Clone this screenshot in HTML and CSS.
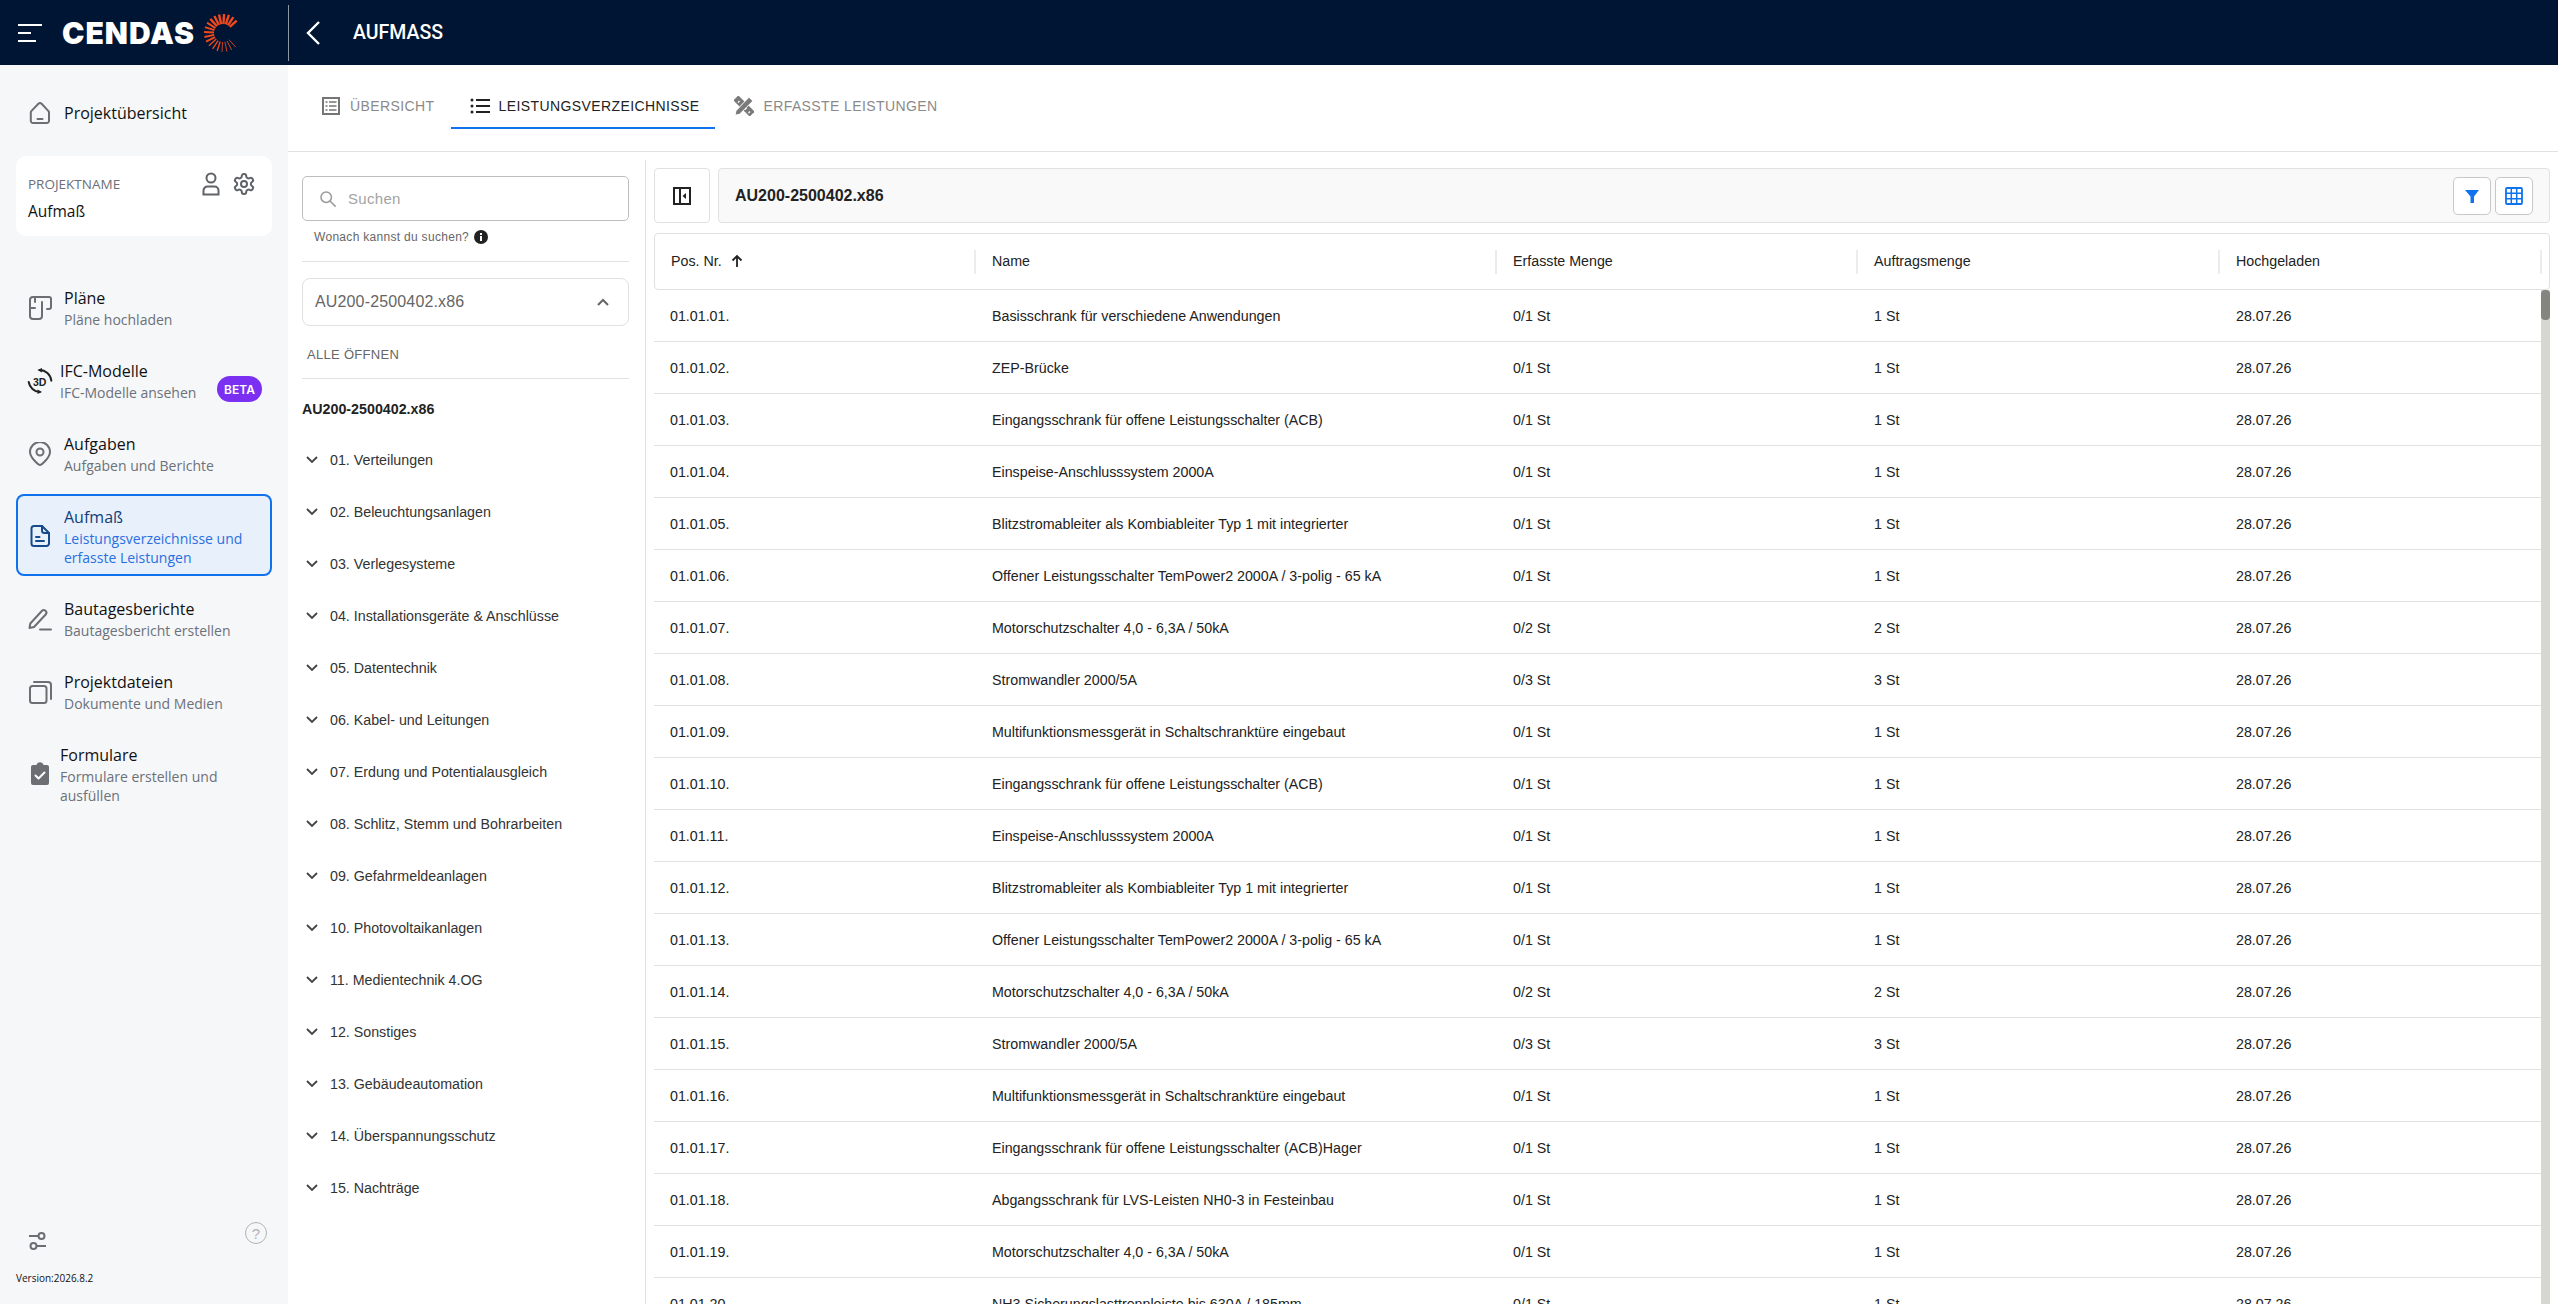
FILE: index.html
```html
<!DOCTYPE html>
<html lang="de">
<head>
<meta charset="utf-8">
<title>CENDAS Aufmaß</title>
<link rel="stylesheet" href="styles.css">
</head>
<body>
<header class="topbar">
  <div class="brand">
    <button class="burger" aria-label="Menü"><i class="bl long"></i><i class="bl short"></i><i class="bl mid"></i></button>
    <span class="logo-text">CENDAS</span>
    <svg class="logo-mark" viewBox="0 0 40 40"><g transform="translate(20 20)">
      <line class="ray r3" x1="9" x2="18.5" transform="rotate(-42)"/><line class="ray r3" x1="9" x2="19" transform="rotate(-57)"/><line class="ray r3" x1="9" x2="19" transform="rotate(-72)"/><line class="ray r3" x1="9" x2="19" transform="rotate(-87)"/><line class="ray r3" x1="9" x2="19" transform="rotate(-102)"/><line class="ray r3" x1="9" x2="19" transform="rotate(-117)"/><line class="ray r3" x1="9" x2="19" transform="rotate(-132)"/><line class="ray r2" x1="9" x2="19" transform="rotate(-147)"/><line class="ray r2" x1="9" x2="19" transform="rotate(-162)"/><line class="ray r2" x1="9" x2="19" transform="rotate(-177)"/><line class="ray r2" x1="9" x2="19" transform="rotate(168)"/><line class="ray r2" x1="9" x2="19" transform="rotate(153)"/><line class="ray r1" x1="9" x2="19" transform="rotate(138)"/><line class="ray r1" x1="9" x2="19" transform="rotate(123)"/><line class="ray r1" x1="9" x2="19" transform="rotate(108)"/><line class="ray r0" x1="9" x2="19" transform="rotate(93)"/><line class="ray r0" x1="9" x2="19" transform="rotate(78)"/><line class="ray r0" x1="9" x2="19" transform="rotate(63)"/><line class="ray r0" x1="9" x2="19" transform="rotate(48)"/>
    </g></svg>
  </div>
  <div class="page-head">
    <svg class="back" viewBox="0 0 16 26"><path d="M14 2 3 13l11 11"/></svg>
    <h1 class="page-title">AUFMASS</h1>
  </div>
</header>
<div class="layout">
  <aside class="sidebar">
    <a class="overview">
      <svg class="ico" viewBox="0 0 24 24"><path d="M10.400 2.800a2.200 2.200 0 0 1 3.200 0l6.900 7.300a2.500 2.500 0 0 1 .5 1.500v8.200a2.200 2.200 0 0 1-2.200 2.200H5a2.200 2.200 0 0 1-2.200-2.200v-8.200a2.500 2.500 0 0 1 .5-1.500z"/><path d="M9.500 18h5"/></svg>
      <span>Projektübersicht</span>
    </a>
    <section class="project-card">
      <div class="project-info">
        <div class="project-label">PROJEKTNAME</div>
        <div class="project-name">Aufmaß</div>
      </div>
      <div class="project-actions">
        <svg class="person" viewBox="0 0 18 24"><circle cx="9" cy="6" r="4.500"/><path d="M1.500 22.500v-4a4 4 0 0 1 4-4h7a4 4 0 0 1 4 4v4z"/></svg>
        <svg class="gear" viewBox="0 0 24 24"><path d="M12.220 2h-.44a2 2 0 0 0-2 2v.18a2 2 0 0 1-1 1.730l-.43.25a2 2 0 0 1-2 0l-.15-.08a2 2 0 0 0-2.730.73l-.22.38a2 2 0 0 0 .73 2.730l.15.1a2 2 0 0 1 1 1.720v.51a2 2 0 0 1-1 1.740l-.15.09a2 2 0 0 0-.73 2.730l.22.38a2 2 0 0 0 2.730.73l.15-.08a2 2 0 0 1 2 0l.43.25a2 2 0 0 1 1 1.730V20a2 2 0 0 0 2 2h.44a2 2 0 0 0 2-2v-.18a2 2 0 0 1 1-1.730l.43-.25a2 2 0 0 1 2 0l.15.08a2 2 0 0 0 2.730-.73l.22-.39a2 2 0 0 0-.73-2.730l-.15-.08a2 2 0 0 1-1-1.740v-.5a2 2 0 0 1 1-1.740l.15-.09a2 2 0 0 0 .73-2.730l-.22-.38a2 2 0 0 0-2.730-.73l-.15.08a2 2 0 0 1-2 0l-.43-.25a2 2 0 0 1-1-1.730V4a2 2 0 0 0-2-2z"/><circle cx="12" cy="12" r="3"/></svg>
      </div>
    </section>
    <nav class="nav">
      <a class="nav-item">
        <svg class="ico" viewBox="0 0 24 24"><path d="M14 6v14a3 3 0 0 1-3 3H5a3 3 0 0 1-3-3V4a3 3 0 0 1 3-3h16a2 2 0 0 1 2 2v8a2 2 0 0 1-2 2h-2"/><path d="M2 12h5"/><path d="M7 1v5"/></svg>
        <div class="nav-text"><div class="nav-title">Pläne</div><div class="nav-sub">Pläne hochladen</div></div>
      </a>
      <a class="nav-item tight">
        <svg class="ico three-d" viewBox="0 0 24 24"><path d="M11.500 1A12 12 0 0 1 23.300 11.700"/><path d="M.7 13A12 12 0 0 0 11.700 23"/><path class="fillp" d="M9.500 1 14 -1 14 3.500z"/><path class="fillp" d="M14 23l-4.500 2 0-4.500z"/><text class="three-d-label" x="11.700" y="16.500">3D</text></svg>
        <div class="nav-text"><div class="nav-title">IFC-Modelle</div><div class="nav-sub">IFC-Modelle ansehen</div></div>
        <span class="beta">BETA</span>
      </a>
      <a class="nav-item">
        <svg class="ico" viewBox="0 0 24 24"><path d="M12 23c-1 0-10-7-10-13a10 10 0 0 1 20 0c0 6-9 13-10 13z"/><circle cx="12" cy="10" r="3.500"/></svg>
        <div class="nav-text"><div class="nav-title">Aufgaben</div><div class="nav-sub">Aufgaben und Berichte</div></div>
      </a>
      <a class="nav-item active">
        <svg class="ico doc" viewBox="0 0 24 24"><path d="M6 2h8l7 7v10.500a2.500 2.500 0 0 1-2.500 2.500h-12.500a2.500 2.500 0 0 1-2.500-2.500v-15a2.500 2.500 0 0 1 2.500-2.500z"/><path d="M14 2v4.500a2.500 2.500 0 0 0 2.500 2.500h4.500"/><path d="M8 13h3.500M8 17h8"/></svg>
        <div class="nav-text"><div class="nav-title">Aufmaß</div><div class="nav-sub">Leistungsverzeichnisse und<br>erfasste Leistungen</div></div>
      </a>
      <a class="nav-item">
        <svg class="ico" viewBox="0 0 24 24"><path d="M1.500 21l.8-4.500L13.800 4a2.600 2.600 0 0 1 3.900 3.500L6 20z"/><path d="M12 22.500h11"/></svg>
        <div class="nav-text"><div class="nav-title">Bautagesberichte</div><div class="nav-sub">Bautagesbericht erstellen</div></div>
      </a>
      <a class="nav-item">
        <svg class="ico" viewBox="0 0 24 24"><rect x="2" y="6" width="16.500" height="17" rx="2.500"/><path d="M6 2h14a3 3 0 0 1 3 3v14"/></svg>
        <div class="nav-text"><div class="nav-title">Projektdateien</div><div class="nav-sub">Dokumente und Medien</div></div>
      </a>
      <a class="nav-item tight">
        <svg class="ico" viewBox="0 0 24 24"><path class="fillg" d="M5 3h3.500a3.600 3.600 0 0 1 7 0H19a2 2 0 0 1 2 2v16a2 2 0 0 1-2 2H5a2 2 0 0 1-2-2V5a2 2 0 0 1 2-2z"/><path class="check" d="m7.500 13.500 3 3 6-6"/></svg>
        <div class="nav-text"><div class="nav-title">Formulare</div><div class="nav-sub">Formulare erstellen und<br>ausfüllen</div></div>
      </a>
    </nav>
    <footer class="side-foot">
      <div class="foot-icons">
        <svg class="sliders" viewBox="0 0 20 20"><path d="M1 5h10M18 15H8"/><circle cx="13.500" cy="5" r="3"/><circle cx="5.500" cy="15" r="3"/></svg>
        <svg class="help" viewBox="0 0 24 24"><circle cx="12" cy="12" r="10.500"/><text class="help-q" x="12" y="17.500">?</text></svg>
      </div>
      <div class="version">Version:2026.8.2</div>
    </footer>
  </aside>
  <main class="main">
    <div class="tabs">
      <div class="tab">
        <svg class="tab-ico" viewBox="0 0 20 20"><rect class="ov-box" x="2" y="2" width="16" height="16"/><path class="ov-lines" d="M4.500 6h2M8 6h7.500M4.500 10h2M8 10h7.500M4.500 14h2M8 14h7.500"/></svg>
        ÜBERSICHT
      </div>
      <div class="tab current">
        <svg class="tab-ico" viewBox="0 0 20 20"><path class="list-lines" d="M6 4h14M6 10h14M6 16h14"/><circle class="list-dot" cx="2" cy="4" r="1.500"/><circle class="list-dot" cx="2" cy="10" r="1.500"/><circle class="list-dot" cx="2" cy="16" r="1.500"/></svg>
        LEISTUNGSVERZEICHNISSE
      </div>
      <div class="tab">
        <svg class="tab-ico" viewBox="0 0 20 20"><rect class="tool" x="6.500" y="-1.500" width="7" height="23" transform="rotate(-45 10 10)"/><path class="tool-gap" d="m4 6.500 1.500-1.500M7.500 10 9 8.500M11 13.500l1.500-1.500M14.500 17l1.500-1.500"/><path class="tool-pen" d="M15 1.200 18.800 5 5.500 18.300 1 19.300l1-4.600z"/></svg>
        ERFASSTE LEISTUNGEN
      </div>
    </div>
    <div class="content">
      <section class="panel">
        <label class="search">
          <svg class="search-ico" viewBox="0 0 20 20"><circle cx="8" cy="8" r="5.800"/><path d="m12.500 12.500 6 6"/></svg>
          <span class="search-ph">Suchen</span>
        </label>
        <div class="hint">Wonach kannst du suchen?
          <svg class="info" viewBox="0 0 14 14"><circle class="info-bg" cx="7" cy="7" r="7"/><rect class="info-i" x="6" y="6" width="2" height="5"/><rect class="info-i" x="6" y="3" width="2" height="2"/></svg>
        </div>
        <div class="divider hint-div"></div>
        <div class="select">
          <span>AU200-2500402.x86</span>
          <svg class="sel-chev" viewBox="0 0 12 8"><path d="M1 7l5-5 5 5"/></svg>
        </div>
        <div class="open-all">ALLE ÖFFNEN</div>
        <div class="divider"></div>
        <div class="tree-root">AU200-2500402.x86</div>
        <ul class="tree">
          <li class="tree-row"><svg class="chev" viewBox="0 0 12 8"><path d="M1 1l5 5 5-5"/></svg>01. Verteilungen</li>
          <li class="tree-row"><svg class="chev" viewBox="0 0 12 8"><path d="M1 1l5 5 5-5"/></svg>02. Beleuchtungsanlagen</li>
          <li class="tree-row"><svg class="chev" viewBox="0 0 12 8"><path d="M1 1l5 5 5-5"/></svg>03. Verlegesysteme</li>
          <li class="tree-row"><svg class="chev" viewBox="0 0 12 8"><path d="M1 1l5 5 5-5"/></svg>04. Installationsgeräte &amp; Anschlüsse</li>
          <li class="tree-row"><svg class="chev" viewBox="0 0 12 8"><path d="M1 1l5 5 5-5"/></svg>05. Datentechnik</li>
          <li class="tree-row"><svg class="chev" viewBox="0 0 12 8"><path d="M1 1l5 5 5-5"/></svg>06. Kabel- und Leitungen</li>
          <li class="tree-row"><svg class="chev" viewBox="0 0 12 8"><path d="M1 1l5 5 5-5"/></svg>07. Erdung und Potentialausgleich</li>
          <li class="tree-row"><svg class="chev" viewBox="0 0 12 8"><path d="M1 1l5 5 5-5"/></svg>08. Schlitz, Stemm und Bohrarbeiten</li>
          <li class="tree-row"><svg class="chev" viewBox="0 0 12 8"><path d="M1 1l5 5 5-5"/></svg>09. Gefahrmeldeanlagen</li>
          <li class="tree-row"><svg class="chev" viewBox="0 0 12 8"><path d="M1 1l5 5 5-5"/></svg>10. Photovoltaikanlagen</li>
          <li class="tree-row"><svg class="chev" viewBox="0 0 12 8"><path d="M1 1l5 5 5-5"/></svg>11. Medientechnik 4.OG</li>
          <li class="tree-row"><svg class="chev" viewBox="0 0 12 8"><path d="M1 1l5 5 5-5"/></svg>12. Sonstiges</li>
          <li class="tree-row"><svg class="chev" viewBox="0 0 12 8"><path d="M1 1l5 5 5-5"/></svg>13. Gebäudeautomation</li>
          <li class="tree-row"><svg class="chev" viewBox="0 0 12 8"><path d="M1 1l5 5 5-5"/></svg>14. Überspannungsschutz</li>
          <li class="tree-row"><svg class="chev" viewBox="0 0 12 8"><path d="M1 1l5 5 5-5"/></svg>15. Nachträge</li>
        </ul>
      </section>
      <section class="data">
        <div class="toolbar">
          <button class="collapse" aria-label="Einklappen">
            <svg class="collapse-ico" viewBox="0 0 18 18"><rect class="c-box" x="1" y="1" width="16" height="16"/><path class="c-line" d="M7 1v16"/><path class="c-tri" d="M13 6v6l-3.500-3z"/></svg>
          </button>
          <div class="title-bar">
            <strong class="file-name">AU200-2500402.x86</strong>
            <div class="title-actions">
              <button class="icon-btn" aria-label="Filter"><svg class="btn-ico" viewBox="0 0 16 16"><path class="filter" d="M1 2h14l-5 6.500V15H6.500V8.500z"/></svg></button>
              <button class="icon-btn" aria-label="Spalten"><svg class="btn-ico grid-ico" viewBox="0 0 18 18"><rect class="g-box" x="1" y="1" width="16" height="16" rx="1"/><path class="g-line" d="M6.300 1v16M11.700 1v16M1 6.300h16M1 11.700h16"/></svg></button>
            </div>
          </div>
        </div>
        <div class="thead">
          <div class="th">Pos. Nr.<svg class="sort" viewBox="0 0 14 14"><path d="M7 13V2M2.500 6.500 7 2l4.500 4.500"/></svg></div>
          <div class="th">Name</div>
          <div class="th">Erfasste Menge</div>
          <div class="th">Auftragsmenge</div>
          <div class="th">Hochgeladen</div>
        </div>
        <div class="tbody">
          <div class="tr"><div>01.01.01.</div><div>Basisschrank für verschiedene Anwendungen</div><div>0/1 St</div><div>1 St</div><div>28.07.26</div></div>
          <div class="tr"><div>01.01.02.</div><div>ZEP-Brücke</div><div>0/1 St</div><div>1 St</div><div>28.07.26</div></div>
          <div class="tr"><div>01.01.03.</div><div>Eingangsschrank für offene Leistungsschalter (ACB)</div><div>0/1 St</div><div>1 St</div><div>28.07.26</div></div>
          <div class="tr"><div>01.01.04.</div><div>Einspeise-Anschlusssystem 2000A</div><div>0/1 St</div><div>1 St</div><div>28.07.26</div></div>
          <div class="tr"><div>01.01.05.</div><div>Blitzstromableiter als Kombiableiter Typ 1 mit integrierter</div><div>0/1 St</div><div>1 St</div><div>28.07.26</div></div>
          <div class="tr"><div>01.01.06.</div><div>Offener Leistungsschalter TemPower2 2000A / 3-polig - 65 kA</div><div>0/1 St</div><div>1 St</div><div>28.07.26</div></div>
          <div class="tr"><div>01.01.07.</div><div>Motorschutzschalter 4,0 - 6,3A / 50kA</div><div>0/2 St</div><div>2 St</div><div>28.07.26</div></div>
          <div class="tr"><div>01.01.08.</div><div>Stromwandler 2000/5A</div><div>0/3 St</div><div>3 St</div><div>28.07.26</div></div>
          <div class="tr"><div>01.01.09.</div><div>Multifunktionsmessgerät in Schaltschranktüre eingebaut</div><div>0/1 St</div><div>1 St</div><div>28.07.26</div></div>
          <div class="tr"><div>01.01.10.</div><div>Eingangsschrank für offene Leistungsschalter (ACB)</div><div>0/1 St</div><div>1 St</div><div>28.07.26</div></div>
          <div class="tr"><div>01.01.11.</div><div>Einspeise-Anschlusssystem 2000A</div><div>0/1 St</div><div>1 St</div><div>28.07.26</div></div>
          <div class="tr"><div>01.01.12.</div><div>Blitzstromableiter als Kombiableiter Typ 1 mit integrierter</div><div>0/1 St</div><div>1 St</div><div>28.07.26</div></div>
          <div class="tr"><div>01.01.13.</div><div>Offener Leistungsschalter TemPower2 2000A / 3-polig - 65 kA</div><div>0/1 St</div><div>1 St</div><div>28.07.26</div></div>
          <div class="tr"><div>01.01.14.</div><div>Motorschutzschalter 4,0 - 6,3A / 50kA</div><div>0/2 St</div><div>2 St</div><div>28.07.26</div></div>
          <div class="tr"><div>01.01.15.</div><div>Stromwandler 2000/5A</div><div>0/3 St</div><div>3 St</div><div>28.07.26</div></div>
          <div class="tr"><div>01.01.16.</div><div>Multifunktionsmessgerät in Schaltschranktüre eingebaut</div><div>0/1 St</div><div>1 St</div><div>28.07.26</div></div>
          <div class="tr"><div>01.01.17.</div><div>Eingangsschrank für offene Leistungsschalter (ACB)Hager</div><div>0/1 St</div><div>1 St</div><div>28.07.26</div></div>
          <div class="tr"><div>01.01.18.</div><div>Abgangsschrank für LVS-Leisten NH0-3 in Festeinbau</div><div>0/1 St</div><div>1 St</div><div>28.07.26</div></div>
          <div class="tr"><div>01.01.19.</div><div>Motorschutzschalter 4,0 - 6,3A / 50kA</div><div>0/1 St</div><div>1 St</div><div>28.07.26</div></div>
          <div class="tr"><div>01.01.20.</div><div>NH3 Sicherungslasttrennleiste bis 630A / 185mm</div><div>0/1 St</div><div>1 St</div><div>28.07.26</div></div>
          <div class="scrollbar"><div class="scroll-thumb"></div></div>
        </div>
      </section>
    </div>
  </main>
</div>
</body>
</html>
```
FILE: styles.css
```css
* { box-sizing: border-box; }
html, body { height: 100%; }
body {
  margin: 0;
  height: 100vh;
  overflow: hidden;
  display: flex;
  flex-direction: column;
  font-family: "Liberation Sans", Arial, sans-serif;
  color: #222;
  background: #fff;
}
button { font: inherit; background: none; padding: 0; border: 0; }
ul { list-style: none; margin: 0; padding: 0; }

/* top bar */
.topbar {
  flex: none;
  height: 65px;
  background: #001533;
  display: flex;
  align-items: center;
  color: #fff;
}
.brand {
  width: 289px;
  height: 56px;
  border-right: 1px solid #8d96a3;
  display: flex;
  align-items: center;
  padding-left: 18px;
  flex: none;
}
.burger { width: 24px; height: 18px; display: flex; flex-direction: column; justify-content: space-between; margin-right: 20px; }
.bl { display: block; height: 2px; background: #fff; }
.bl.long { width: 24px; }
.bl.short { width: 13px; }
.bl.mid { width: 18px; }
.logo-text {
  font-family: Inter, "Liberation Sans", sans-serif;
  font-weight: 900;
  font-size: 30px;
  letter-spacing: 1px;
  line-height: 1;
}
.logo-mark { width: 40px; height: 40px; margin-left: 8px; }
.ray { stroke: #f0491f; }
.r3 { stroke-width: 2.400; }
.r2 { stroke-width: 1.900; }
.r1 { stroke-width: 1.300; }
.r0 { stroke-width: .8; }
.page-head { display: flex; align-items: center; padding-left: 16px; }
.back { width: 16px; height: 26px; fill: none; stroke: #fff; stroke-width: 2.400; }
.page-title {
  margin: 0 0 0 32px;
  font-family: Roboto, sans-serif;
  font-weight: 500;
  font-size: 19.500px;
}

.layout { flex: 1; min-height: 0; display: flex; }

/* sidebar */
.sidebar {
  flex: none;
  width: 288px;
  background: #f6f7f9;
  padding: 0 16px;
  display: flex;
  flex-direction: column;
  font-family: "Open Sans", "Noto Sans", sans-serif;
  color: #111;
}
.ico { flex: none; width: 24px; height: 24px; fill: none; stroke: #6b6e73; stroke-width: 2; stroke-linecap: round; stroke-linejoin: round; }
.overview {
  display: flex;
  align-items: center;
  gap: 12px;
  padding: 35px 12px 0;
  height: 60px;
  font-size: 16px;
}
.project-card {
  margin-top: 31px;
  height: 80px;
  background: #fff;
  border-radius: 10px;
  padding: 16px 16px 0 12px;
  display: flex;
  justify-content: space-between;
}
.project-label { font-size: 13.500px; line-height: 24px; color: #6b7078; }
.project-name { font-size: 15.500px; line-height: 24px; margin-top: 3px; }
.project-actions { display: flex; gap: 12px; }
.person { width: 18px; height: 24px; fill: none; stroke: #5f6368; stroke-width: 2; }
.gear { width: 24px; height: 24px; fill: none; stroke: #5f6368; stroke-width: 2; }

.nav { margin-top: 39px; display: flex; flex-direction: column; gap: 10px; }
.nav-item {
  position: relative;
  display: flex;
  align-items: center;
  gap: 12px;
  padding: 11px 12px 9px;
  border-radius: 8px;
}
.nav-item.tight { gap: 8px; }
.nav-title { font-size: 16px; line-height: 24px; color: #111; }
.nav-sub { font-size: 14px; line-height: 19px; color: #6c717a; }
.nav-item.active {
  background: #e8f0fb;
  box-shadow: inset 0 0 0 2px #1172ee;
}
.nav-item.active .nav-title { color: #123e78; }
.nav-item.active .nav-sub { color: #2a6fe0; }
.doc { stroke: #164a8a; }
.three-d { stroke: #222; overflow: visible; }
.fillp { fill: #222; stroke: none; }
.three-d-label { font-family: "Liberation Sans", sans-serif; font-size: 10.500px; font-weight: 700; text-anchor: middle; fill: #222; stroke: none; }
.fillg { fill: #6b6e73; stroke: none; }
.check { stroke: #fff; }
.beta {
  position: absolute;
  left: 201px;
  top: 28px;
  width: 45px;
  height: 26px;
  border-radius: 13px;
  background: #7b2ff0;
  color: #fff;
  font-family: Inter, sans-serif;
  font-size: 12px;
  font-weight: 600;
  display: flex;
  align-items: center;
  justify-content: center;
}
.side-foot { margin-top: auto; padding-bottom: 19px; }
.foot-icons { display: flex; justify-content: space-between; align-items: flex-start; padding: 0 4px 0 12px; }
.sliders { width: 20px; height: 20px; margin-top: 8px; fill: none; stroke: #6b6e73; stroke-width: 2; }
.help { width: 24px; height: 24px; margin-top: -2px; fill: none; stroke: #b3b3b3; stroke-width: 1; }
.help-q { font-family: "Liberation Sans", sans-serif; font-size: 15px; text-anchor: middle; fill: #b3b3b3; stroke: none; }
.version { font-size: 10px; line-height: 14px; margin-top: 20px; color: #111; }

/* main */
.main { flex: 1; min-width: 0; display: flex; flex-direction: column; }
.tabs {
  flex: none;
  height: 87px;
  padding: 20px 0 0 14px;
  border-bottom: 1px solid #e1e1e1;
  display: flex;
  align-items: flex-start;
}
.tab {
  height: 44px;
  padding: 0 16px 2px 19px;
  display: flex;
  align-items: center;
  gap: 9px;
  font-size: 14px;
  letter-spacing: .4px;
  color: #8a8a8a;
}
.tab.current { color: #222; border-bottom: 2px solid #1172ee; padding-bottom: 0; }
.tab-ico { width: 20px; height: 20px; flex: none; }
.ov-box { fill: #fff; stroke: #757575; stroke-width: 2; }
.ov-lines { stroke: #757575; stroke-width: 1.700; }
.list-lines { stroke: #222; stroke-width: 2; }
.list-dot { fill: #222; }
.tool { fill: #7a7a7a; }
.tool-gap { stroke: #fff; stroke-width: 1.200; }
.tool-pen { fill: #7a7a7a; stroke: #fff; stroke-width: 1; }

.content { flex: 1; min-height: 0; display: flex; padding-top: 8px; }
.panel {
  flex: none;
  width: 358px;
  border-right: 1px solid #e1e1e1;
  padding: 16px 16px 0 14px;
  display: flex;
  flex-direction: column;
}
.search {
  height: 45px;
  flex: none;
  border: 1px solid #bdbdbd;
  border-radius: 5px;
  display: flex;
  align-items: center;
  padding-left: 16px;
  gap: 11px;
}
.search-ico { width: 18px; height: 18px; fill: none; stroke: #9a9a9a; stroke-width: 1.700; }
.search-ph { font-size: 15px; color: #a3a3a3; letter-spacing: .3px; }
.hint {
  margin-top: 8px;
  height: 16px;
  padding-left: 12px;
  font-size: 12px;
  letter-spacing: .3px;
  color: #666;
  display: flex;
  align-items: center;
  gap: 5px;
}
.info { width: 14px; height: 14px; }
.info-bg { fill: #222; }
.info-i { fill: #fff; }
.divider { flex: none; height: 1px; background: #e1e1e1; }
.hint-div { margin-top: 16px; }
.select {
  flex: none;
  margin-top: 16px;
  height: 48px;
  border: 1px solid #e1e1e1;
  border-radius: 8px;
  display: flex;
  align-items: center;
  justify-content: space-between;
  padding: 0 19px 0 12px;
  font-size: 16px;
  letter-spacing: .15px;
  color: #666;
}
.sel-chev { width: 12px; height: 8px; fill: none; stroke: #666; stroke-width: 2; }
.open-all { flex: none; margin-top: 15px; height: 28px; line-height: 28px; padding-left: 5px; font-size: 13px; letter-spacing: .3px; color: #666; }
.open-all + .divider { margin-top: 9px; }
.tree-root { flex: none; margin-top: 20px; height: 20px; line-height: 20px; font-size: 14.250px; font-weight: 700; color: #222; }
.tree { margin-top: 15px; }
.tree-row { height: 52px; display: flex; align-items: center; gap: 12px; padding-left: 4px; font-size: 14.250px; color: #333; }
.chev { width: 12px; height: 8px; flex: none; fill: none; stroke: #444; stroke-width: 1.800; }

.data { flex: 1; min-width: 0; display: flex; flex-direction: column; padding: 8px 8px 0 8px; }
.toolbar { flex: none; display: flex; gap: 8px; height: 55px; }
.collapse { flex: none; width: 56px; border: 1px solid #e1e1e1; border-radius: 4px; display: flex; align-items: center; justify-content: center; background: #fff; }
.collapse-ico { width: 18px; height: 18px; }
.c-box { fill: none; stroke: #222; stroke-width: 2; }
.c-line { stroke: #222; stroke-width: 2; }
.c-tri { fill: #222; }
.title-bar {
  flex: 1;
  display: flex;
  align-items: center;
  justify-content: space-between;
  background: #f9f9f9;
  border: 1px solid #e1e1e1;
  border-radius: 4px;
  padding: 0 16px 0 16px;
}
.file-name { font-size: 16px; color: #222; }
.title-actions { display: flex; gap: 4px; }
.icon-btn {
  width: 38px;
  height: 38px;
  border: 1px solid #c8c8c8;
  border-radius: 5px;
  background: #fff;
  display: flex;
  align-items: center;
  justify-content: center;
}
.btn-ico { width: 16px; height: 16px; }
.grid-ico { width: 18px; height: 18px; }
.filter { fill: #1172ee; }
.g-box { fill: #fff; stroke: #1172ee; stroke-width: 1.800; }
.g-line { stroke: #1172ee; stroke-width: 1.500; }

.thead {
  flex: none;
  margin-top: 10px;
  height: 57px;
  border: 1px solid #e1e1e1;
  border-radius: 4px;
  display: grid;
  grid-template-columns: 321px 521px 361px 362px 322px;
  align-items: center;
}
.th {
  height: 24px;
  padding: 0 0 2px 16px;
  border-right: 2px solid #ececec;
  display: flex;
  align-items: center;
  gap: 8px;
  font-size: 14.250px;
  color: #222;
}
.sort { width: 14px; height: 14px; fill: none; stroke: #222; stroke-width: 1.800; }
.tbody { flex: 1; min-height: 0; overflow: hidden; position: relative; padding-right: 9px; }
.tr {
  height: 52px;
  display: grid;
  grid-template-columns: 322px 521px 361px 362px 1fr;
  align-items: center;
  border-bottom: 1px solid #e1e1e1;
  font-size: 14.250px;
  color: #222;
}
.tr > div { padding-left: 16px; }
.scrollbar { position: absolute; top: 0; bottom: 0; right: 0; width: 9px; background: #d7d7d2; }
.scroll-thumb { height: 30px; background: #85857f; border-radius: 4px; }
```
